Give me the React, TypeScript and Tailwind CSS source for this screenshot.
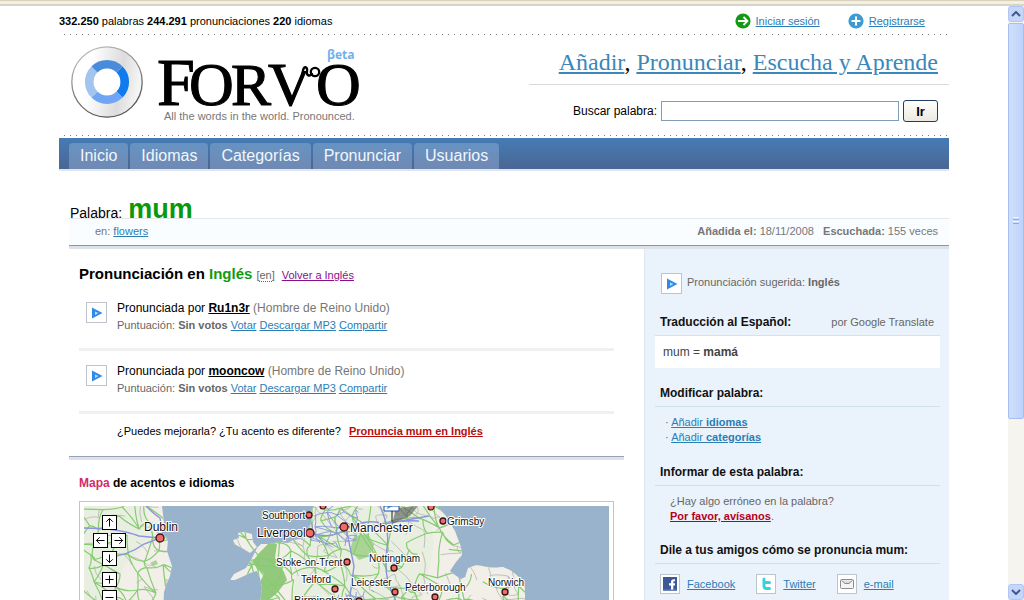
import type { ReactNode } from 'react';

const LINK = 'text-[#2a7db5] underline';

const NAV = ['Inicio', 'Idiomas', 'Categorías', 'Pronunciar', 'Usuarios'];

const SPEAKERS = [
  { name: 'Ru1n3r', origin: '(Hombre de Reino Unido)' },
  { name: 'mooncow', origin: '(Hombre de Reino Unido)' },
];

function DottedLine() {
  return (
    <div className="ml-[5px] h-px bg-[repeating-linear-gradient(90deg,#777777_0px,#777777_1px,transparent_1px,transparent_6px)]" />
  );
}

function Logo() {
  return (
    <svg viewBox="0 0 300 84" className="ml-[11px] block h-[84px] w-[300px] shrink-0" role="img" aria-label="Forvo">
      <defs>
        <linearGradient id="disc" x1="0" y1="0" x2="1" y2="0.15">
          <stop offset="0.3" stopColor="#ffffff" />
          <stop offset="0.75" stopColor="#dcdcdc" />
          <stop offset="1" stopColor="#f4f4f4" />
        </linearGradient>
        <linearGradient id="rim" x1="0" y1="0" x2="0.4" y2="1">
          <stop offset="0" stopColor="#c8c8c8" />
          <stop offset="1" stopColor="#555555" />
        </linearGradient>
        <clipPath id="vStem">
          <path d="M190 10H220V28H236V70H190Z" />
        </clipPath>
      </defs>
      <circle cx="37" cy="39" r="35.2" fill="url(#disc)" stroke="url(#rim)" strokeWidth="1.3" />
      <g fill="none" strokeWidth="9">
        <path d="M49.4 26.6A17.5 17.5 0 0 1 49.4 51.4" stroke="#0f7bef" />
        <path d="M49.4 51.4A17.5 17.5 0 0 1 24.6 51.4" stroke="#6fa5f4" />
        <path d="M24.6 51.4A17.5 17.5 0 0 1 24.6 26.6" stroke="#a3c4ee" />
        <path d="M24.6 26.6A17.5 17.5 0 0 1 49.4 26.6" stroke="#4a8cdc" />
      </g>
      <circle cx="37" cy="39" r="13.4" fill="#ffffff" />
      <g fontFamily="'Liberation Serif', serif" fill="#000000" stroke="#000000" strokeWidth="1.1">
        <text x="87" y="62" fontSize="68">F</text>
        <text x="119" y="62" fontSize="62">O</text>
        <text x="161" y="62" fontSize="60">R</text>
        <g clipPath="url(#vStem)">
          <text x="198" y="62" fontSize="62">V</text>
        </g>
        <text x="246" y="62" fontSize="62">O</text>
      </g>
      <path d="M231.500 35L233 28C233.500 22 238 24 237 28C236 32 239 34 242 31" fill="none" stroke="#000000" strokeWidth="2.4" strokeLinecap="round" />
      <circle cx="245" cy="29" r="4.2" fill="none" stroke="#000000" strokeWidth="2.3" />
      <text x="257" y="16" fontSize="12" fontWeight="700" fontFamily="'Open Sans', sans-serif" fill="#6fb0ee">βeta</text>
      <text x="94" y="77" fontSize="11" fontFamily="'Liberation Sans', sans-serif" fill="#777777">All the words in the world. Pronounced.</text>
    </svg>
  );
}

function PlayButton({ label }: { label: string }) {
  return (
    <button type="button" aria-label={label} className="flex size-[21px] shrink-0 items-center justify-center border border-[#bfc3ca] bg-white">
      <svg viewBox="0 0 12 12" className="size-3">
        <path d="M1 0.5L11.5 6L1 11.5Z" fill="#2f8be6" />
        <path d="M4 4.4L7.4 6L4 8Z" fill="#b5dbfa" />
      </svg>
    </button>
  );
}

function SideHeading({ children }: { children: ReactNode }) {
  return <h3 className="border-b border-[#cfdfec] pb-1.5 pl-[5px] text-xs leading-[14px] font-bold text-[#111]">{children}</h3>;
}

function Rule() {
  return <div className="h-[3px] bg-[#f0f0f0]" />;
}

/* ---------- map ---------- */

const IRELAND = 'M0 0L78 0L80 17L77 24L84 34L83 45L88 60L86 70L83 77L80 86L79 110L0 110Z';
const BRITAIN =
  'M230 0L226 8L228 16L223 24L224 30L217 33L209 34L204 37L194 36L186 38L177 38L173 42L168 52L162 62L150 68L146 74L151 74L160 70L166 67L173 65L176 72L178 82L174 110L441 110L441 82L436 72L428 65L419 61L405 61L392 59L384 62L381 71L377 73L371 69L366 65L372 56L378 49L377 41L371 25L362 10L353 0Z';
const ANGLESEY = 'M149 34L155 32L154 27L160 26L168 28L169 36L173 41L166 47L158 42L150 38Z';

function makeRoads(cell: number, start: number, keep: number) {
  let seed = start;
  const rand = () => {
    seed = (seed * 16807) % 2147483647;
    return seed / 2147483647;
  };
  const cols = Math.ceil(530 / cell) + 1;
  const rows = Math.ceil(110 / cell) + 1;
  const nodes = Array.from({ length: rows * cols }, (_, i) => [
    ((i % cols) + rand() * 0.9 - 0.4) * cell,
    (Math.floor(i / cols) + rand() * 0.9 - 0.4) * cell,
  ]);
  let d = '';
  const join = (a: number[], b: number[]) => {
    if (rand() > keep) return;
    const mx = (a[0] + b[0]) / 2 + (rand() - 0.5) * cell * 0.5;
    const my = (a[1] + b[1]) / 2 + (rand() - 0.5) * cell * 0.5;
    d += `M${a[0].toFixed(1)} ${a[1].toFixed(1)}Q${mx.toFixed(1)} ${my.toFixed(1)} ${b[0].toFixed(1)} ${b[1].toFixed(1)}`;
  };
  for (let r = 0; r < rows; r++) {
    for (let c = 0; c < cols; c++) {
      const i = r * cols + c;
      if (c < cols - 1) join(nodes[i], nodes[i + 1]);
      if (r < rows - 1) join(nodes[i], nodes[i + cols]);
      if (r < rows - 1 && c < cols - 1 && rand() > 0.5) join(nodes[i], nodes[i + cols + 1]);
    }
  }
  return d;
}

const MAIN_ROADS = makeRoads(16, 4711, 0.78);
const MINOR_ROADS = makeRoads(12, 913, 0.25);
const CITY_ROADS = makeRoads(9, 77, 0.75);

const CITIES = [
  { name: 'Dublin', x: 76, y: 32, r: 4, tx: 60, ty: 25, size: 12 },
  { name: 'Southport', x: 225, y: 9, r: 3, tx: 178, ty: 13, size: 10 },
  { name: 'Liverpool', x: 226, y: 27, r: 4, tx: 173, ty: 31, size: 12 },
  { name: 'Manchester', x: 260, y: 21, r: 4, tx: 266, ty: 26, size: 12 },
  { name: 'Stoke-on-Trent', x: 263, y: 56, r: 3, tx: 192, ty: 60, size: 10 },
  { name: 'Telford', x: 251, y: 83, r: 3, tx: 217, ty: 77, size: 10 },
  { name: 'Nottingham', x: 310, y: 62, r: 3, tx: 285, ty: 56, size: 10 },
  { name: 'Leicester', x: 311, y: 86, r: 3, tx: 267, ty: 80, size: 10 },
  { name: 'Peterborough', x: 351, y: 91, r: 3, tx: 321, ty: 85, size: 10 },
  { name: 'Grimsby', x: 359, y: 15, r: 3, tx: 363, ty: 19, size: 10 },
  { name: 'Norwich', x: 421, y: 86, r: 3, tx: 404, ty: 80, size: 10 },
  { name: 'Birmingham', x: 275, y: 95, r: 3, tx: 210, ty: 98, size: 11 },
];

const MAP_BUTTONS = [
  { label: 'Mover arriba', x: 18, y: 9, d: 'M8 13V3M4 7L8 3L12 7' },
  { label: 'Mover a la izquierda', x: 9, y: 27, d: 'M13 8H3M7 4L3 8L7 12' },
  { label: 'Mover a la derecha', x: 27, y: 27, d: 'M3 8H13M9 4L13 8L9 12' },
  { label: 'Mover abajo', x: 18, y: 45, d: 'M8 3V13M4 9L8 13L12 9' },
  { label: 'Acercar', x: 18, y: 66, d: 'M3 8H13M8 3V13' },
  { label: 'Alejar', x: 18, y: 84, d: 'M3 8H13' },
];

function AccentMap() {
  return (
    <div className="border border-[#c4c4c4] bg-white p-1">
      <div className="relative h-[110px] overflow-hidden bg-[#99b3cc]">
        <svg viewBox="0 0 525 110" preserveAspectRatio="xMinYMin slice" className="block h-[110px] w-full">
          <defs>
            <clipPath id="land">
              <path d={IRELAND} />
              <path d={BRITAIN} />
              <path d={ANGLESEY} />
            </clipPath>
            <clipPath id="northwest">
              <path d="M228 0H275L272 38L250 42L226 34ZM255 88L290 84V110H240Z" />
            </clipPath>
          </defs>
          <rect width="525" height="110" fill="#99b3cc" />
          <g clipPath="url(#land)">
            <rect width="525" height="110" fill="#f2efe9" />
            <path d="M0 0H60L70 30L40 60L20 110H0ZM230 0H345L350 40L335 110H205L215 50Z" fill="#e6efdc" opacity="0.7" />
            <path d="M186 36L193 38L191 52L200 66L203 74L194 86L184 95L176 110L174 80L180 68L168 56L176 46Z" fill="#92c97c" />
            <path d="M270 30L284 28L290 38L286 50L275 54L266 44Z" fill="#a9d496" />
            <path d="M66 57L72 54L74 58L69 60Z" fill="#a9d496" />
            <path d={MINOR_ROADS} fill="none" stroke="#b3b5ad" strokeWidth="0.8" />
            <path d={MAIN_ROADS} fill="none" stroke="#86cc70" strokeWidth="1.2" />
            <g clipPath="url(#northwest)">
              <path d={CITY_ROADS} fill="none" stroke="#8693dd" strokeWidth="0.9" />
            </g>
            <path d="M62 0Q70 8 76 12L79 30M0 22Q34 22 55 30L76 32M20 52Q44 50 60 38L76 32M226 27Q250 34 262 22Q284 12 300 18L345 10M296 0Q306 22 303 42Q299 70 309 88L318 110M262 22L270 60L266 90L280 110M300 18Q318 14 335 15" fill="none" stroke="#8c94de" strokeWidth="1.4" />
          </g>
          <path d="M312 2L334 0L326 10L308 18Z" fill="#555555" opacity="0.6" />
          <path d="M300 0H315V5H300Z" fill="#ffffff" stroke="#1f4f9c" />
          <path d="M303 3L309 0H304Z" fill="#2f8be6" />
          <path d="M308 5V16" stroke="#222222" />
          <g fill="#f07070" stroke="#3a1414" strokeWidth="1.2">
            <circle cx="239" cy="0" r="3" />
            <circle cx="347" cy="1" r="3" />
          </g>
          {CITIES.map((c) => (
            <g key={c.name}>
              <circle cx={c.x} cy={c.y} r={c.r} fill="#f06a6a" stroke="#3a1414" strokeWidth="1.3" />
              <text x={c.tx} y={c.ty} fontSize={c.size} fontFamily="'Liberation Sans', sans-serif" fill="#111111" stroke="#ffffff" strokeWidth="2" strokeLinejoin="round" paintOrder="stroke">
                {c.name}
              </text>
            </g>
          ))}
        </svg>
        {MAP_BUTTONS.map((b) => (
          <button key={b.label} type="button" aria-label={b.label} className="absolute size-[15px] border border-black bg-white" style={{ left: b.x, top: b.y }}>
            <svg viewBox="0 0 16 16" className="size-[13px]">
              <path d={b.d} fill="none" stroke="#000000" strokeWidth="1.2" />
            </svg>
          </button>
        ))}
      </div>
    </div>
  );
}

/* ---------- page parts ---------- */

function Header() {
  return (
    <header>
      <div className="flex h-7 items-center text-[11px]">
        <p className="flex-1 pt-0.5">
          <b>332.250</b> palabras <b>244.291</b> pronunciaciones <b>220</b> idiomas
        </p>
        <div className="flex items-center gap-7 pt-0.5 pr-6">
          <a href="#login" className="flex items-center gap-[5px]">
            <svg viewBox="0 0 16 16" className="size-4">
              <circle cx="8" cy="8" r="7.6" fill="#139a13" />
              <path d="M3 8H12M8.5 4L12.5 8L8.5 12" fill="none" stroke="#ffffff" strokeWidth="1.8" />
            </svg>
            <span className={LINK}>Iniciar sesión</span>
          </a>
          <a href="#register" className="flex items-center gap-[5px]">
            <svg viewBox="0 0 16 16" className="size-4">
              <circle cx="8" cy="8" r="7.6" fill="#3d9bd2" />
              <path d="M3.5 8H12.5M8 3.5V12.5" fill="none" stroke="#ffffff" strokeWidth="2" />
            </svg>
            <span className={LINK}>Registrarse</span>
          </a>
        </div>
      </div>
      <DottedLine />
      <div className="flex h-[100px] items-start justify-between pt-2">
        <Logo />
        <div className="w-[420px]">
          <p className="border-b border-[#d9d9d9] pr-[11px] pb-[3px] text-right font-['Liberation_Serif',serif] text-2xl leading-[38px] whitespace-nowrap">
            <a href="#add" className="text-[#3a87bb] underline">Añadir</a>, <a href="#pronounce" className="text-[#3a87bb] underline">Pronunciar</a>,{' '}
            <a href="#listen" className="text-[#3a87bb] underline">Escucha y Aprende</a>
          </p>
          <form className="flex items-center justify-end gap-1 pt-[15px] pr-[11px]">
            <label htmlFor="search" className="text-xs">Buscar palabra:</label>
            <input id="search" type="text" className="h-5 w-[238px] border border-[#7f9db9] bg-white px-1 text-xs outline-none" />
            <button type="submit" className="h-[22px] w-[35px] rounded-[3px] border border-[#1f3c66] bg-linear-to-b from-white to-[#ebe9e0] text-[13px] leading-none font-bold">
              Ir
            </button>
          </form>
        </div>
      </div>
      <DottedLine />
      <nav className="mt-0.5 flex h-[33px] items-end gap-0.5 border-b-2 border-[#dfe6ef] bg-linear-to-b from-[#447cb5] to-[#4a6694] pl-2.5">
        {NAV.map((item) => (
          <a key={item} href={`#${item}`} className="flex h-[26px] items-center rounded-t-[4px] bg-linear-to-b from-[#6693c3] to-[#7089b3] px-[11px] text-base text-[#f2f6fb]">
            {item}
          </a>
        ))}
      </nav>
    </header>
  );
}

function WordBar() {
  return (
    <section className="ml-2.5 pt-[23px]">
      <h1 className="flex h-6 items-baseline gap-1.5 pl-px text-sm leading-[30px]">
        Palabra: <span className="text-[27px] leading-[30px] font-bold text-[#0a990a]">mum</span>
      </h1>
      <div className="flex h-7 items-center justify-between border-t border-b border-t-[#e4e8ea] border-b-[#8f96a6] bg-[#f9fdff] pr-[11px] pb-0.5 pl-[26px] text-[11px] text-[#777]">
        <p>en: <a href="#flowers" className={LINK}>flowers</a></p>
        <p>
          <b>Añadida el:</b> 18/11/2008 &nbsp; <b>Escuchada:</b> 155 veces
        </p>
      </div>
      <div className="h-[3px] bg-[#dde1ea]" />
    </section>
  );
}

function Speaker({ name, origin }: { name: string; origin: string }) {
  return (
    <li>
      <div className="flex h-[60px] gap-2.5 pt-3.5 pl-[7px]">
        <PlayButton label={`Escuchar a ${name}`} />
        <div className="-mt-0.5">
          <p className="text-xs leading-[17px] text-[#777]">
            <span className="text-black">Pronunciada por <a href={`#${name}`} className="font-bold underline">{name}</a></span> {origin}
          </p>
          <p className="text-[11px] leading-[17px] text-[#666]">
            Puntuación: <b>Sin votos</b> <a href="#vote" className={LINK}>Votar</a>{' '}
            <a href="#mp3" className={LINK}>Descargar MP3</a>{' '}
            <a href="#share" className={LINK}>Compartir</a>
          </p>
        </div>
      </div>
      <Rule />
    </li>
  );
}

function Pronunciations() {
  return (
    <main className="min-w-0 flex-1 pr-5">
      <section className="px-2.5 pt-[15px]">
        <div className="flex items-baseline leading-5">
          <h2 className="text-[15px] font-bold">Pronunciación en <span className="text-[#139a13]">Inglés</span></h2>
          <span className="ml-1 text-[11px] text-[#666]">[<abbr title="Inglés" className="border-b border-dotted border-[#666] no-underline">en</abbr>]</span>
          <a href="#back" className="ml-[7px] text-[11px] text-[#8a0f8a] underline">Volver a Inglés</a>
        </div>
        <ul className="pt-[3px]">
          {SPEAKERS.map((s) => (
            <Speaker key={s.name} {...s} />
          ))}
        </ul>
        <p className="flex h-[42px] items-center gap-2 pb-2 pl-[38px] text-[11px]">
          ¿Puedes mejorarla? ¿Tu acento es diferente?
          <a href="#record" className="font-bold text-[#b80d0d] underline">Pronuncia mum en Inglés</a>
        </p>
      </section>
      <div className="h-1 border-t border-[#97a0b8] bg-[#dde1ea]" />
      <section className="px-2.5 pt-[15px]">
        <h2 className="pb-2.5 text-xs leading-4 font-bold"><span className="text-[#d42a6a]">Mapa</span> de acentos e idiomas</h2>
        <AccentMap />
      </section>
    </main>
  );
}

function ShareLink({ label, children }: { label: string; children: ReactNode }) {
  return (
    <a href={`#${label}`} className="flex items-center gap-[7px]">
      <span className="flex size-5 items-center justify-center border border-[#bfc3ca] bg-white">{children}</span>
      <span className={LINK}>{label}</span>
    </a>
  );
}

function Sidebar() {
  return (
    <aside className="w-[305px] shrink-0 border-l border-[#dbe8f3] bg-[#eaf3fb] pt-6 pr-[9px] pb-10 pl-2.5 text-[11px] text-[#666]">
      <div className="flex gap-[5px] pl-1.5">
        <PlayButton label="Escuchar pronunciación sugerida" />
        <p className="leading-[18px]">Pronunciación sugerida: <b>Inglés</b></p>
      </div>
      <section className="pt-[21px]">
        <div className="flex items-baseline justify-between pr-1.5 pb-1.5 pl-[5px]">
          <h3 className="text-xs leading-[14px] font-bold text-[#111]">Traducción al Español:</h3>
          <span className="leading-[14px]">por Google Translate</span>
        </div>
        <p className="border-t border-[#d3e2ee] bg-white px-2 text-xs leading-8 text-[#444]">mum = <b>mamá</b></p>
      </section>
      <section className="pt-[18px]">
        <SideHeading>Modificar palabra:</SideHeading>
        <ul className="pt-2 pl-2.5 leading-[15px]">
          <li>· <a href="#languages" className={LINK}>Añadir <b>idiomas</b></a></li>
          <li>· <a href="#categories" className={LINK}>Añadir <b>categorías</b></a></li>
        </ul>
      </section>
      <section className="pt-5">
        <SideHeading>Informar de esta palabra:</SideHeading>
        <p className="pt-2 pl-[15px] leading-[15px]">
          ¿Hay algo erróneo en la palabra?
          <br />
          <a href="#report" className="font-bold text-[#b8001a] underline">Por favor, avísanos</a>.
        </p>
      </section>
      <section className="pt-[19px]">
        <SideHeading>Dile a tus amigos cómo se pronuncia mum:</SideHeading>
        <div className="flex gap-[21px] pt-2.5 pl-[5px]">
          <ShareLink label="Facebook">
            <svg viewBox="0 0 14 14" className="size-3.5">
              <rect width="14" height="14" fill="#3b5998" />
              <path d="M8 14V8.5H6V6.3H8V4.8C8 2.8 9 2 12 2.2V4.3C10.6 4.2 10.3 4.4 10.3 5.3V6.3H12V8.5H10.3V14Z" fill="#ffffff" />
              <path d="M0 12.5H14V14H0Z" fill="#6d84b4" />
            </svg>
          </ShareLink>
          <ShareLink label="Twitter">
            <svg viewBox="0 0 14 14" className="size-3.5">
              <path d="M5 2V9Q5 11.5 7.5 11.5H10.5M5 5.5H10.5" fill="none" stroke="#35d3e0" strokeWidth="3" strokeLinecap="round" />
            </svg>
          </ShareLink>
          <ShareLink label="e-mail">
            <svg viewBox="0 0 14 14" className="size-3.5">
              <rect x="0.5" y="2.5" width="13" height="9" rx="1" fill="#f4f4f4" stroke="#8c8c8c" />
              <path d="M1.5 3.5L5 6.5H9L12.5 3.5" fill="#dddddd" stroke="#8c8c8c" />
            </svg>
          </ShareLink>
        </div>
      </section>
    </aside>
  );
}

function ScrollButton({ label, d }: { label: string; d: string }) {
  return (
    <button type="button" aria-label={label} className="flex h-4 shrink-0 items-center justify-center rounded-[3px] border border-[#b0c6f5] bg-[#c6d6fb]">
      <svg viewBox="0 0 10 6" className="h-1.5 w-2.5">
        <path d={d} fill="none" stroke="#3f5a8c" strokeWidth="2" />
      </svg>
    </button>
  );
}

function Scrollbar() {
  return (
    <div className="flex w-4 shrink-0 flex-col bg-[#f5f4ef]">
      <ScrollButton label="Subir" d="M1 5L5 1L9 5" />
      <div className="min-h-0 flex-1 pt-px">
        <div className="flex h-[70.5%] flex-col items-center justify-center gap-px rounded-[2px] border border-[#a5bdf0] bg-linear-to-r from-[#cfdffd] to-[#bfd2fa]">
          <i className="h-px w-1.5 bg-[#eef4ff]" />
          <i className="h-px w-1.5 bg-[#8cabf0]" />
          <i className="h-px w-1.5 bg-[#eef4ff]" />
          <i className="h-px w-1.5 bg-[#8cabf0]" />
        </div>
      </div>
      <ScrollButton label="Bajar" d="M1 1L5 5L9 1" />
    </div>
  );
}

export default function App() {
  return (
    <div className="flex h-screen flex-col overflow-hidden bg-white font-['Liberation_Sans',Arial,sans-serif] text-black">
      <div className="h-1.5 shrink-0 border-t border-b-2 border-t-[#d8d2bd] border-b-[#d9d5c6] bg-[#f1eee2]" />
      <div className="flex min-h-0 flex-1">
        <div className="min-w-0 flex-1 overflow-hidden">
          <div className="mx-auto w-full max-w-[890px]">
            <Header />
            <WordBar />
            <div className="ml-2.5 flex">
              <Pronunciations />
              <Sidebar />
            </div>
          </div>
        </div>
        <Scrollbar />
      </div>
    </div>
  );
}
